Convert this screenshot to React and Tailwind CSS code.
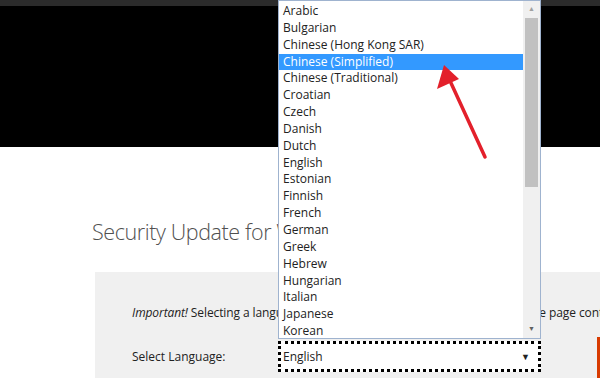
import React from "react";

const langs = [
  "Arabic","Bulgarian","Chinese (Hong Kong SAR)","Chinese (Simplified)","Chinese (Traditional)",
  "Croatian","Czech","Danish","Dutch","English","Estonian","Finnish","French","German","Greek",
  "Hebrew","Hungarian","Italian","Japanese","Korean",
];

export default function App() {
  return (
    <div className="relative w-[600px] h-[378px] overflow-hidden bg-white font-['Open_Sans',sans-serif] text-[#222]">
      <div className="h-[147px] bg-black border-t-[6px] border-[#2b2b2b]" />
      <div className="pt-[71px] pl-[92px] text-[21.5px] tracking-[-0.4px] font-light text-[#505050] leading-[28px] whitespace-nowrap">
        Security Update for Windows
      </div>
      <div className="mt-[26px] ml-[95px] h-[200px] bg-[#f0f0f0] pl-[37px] pt-[33px] text-[12px] relative">
        <div className="whitespace-nowrap leading-[16px] tracking-[-0.1px]">
          <i>Important!</i> Selecting a language below will dynamically change the complete page content to that language.
        </div>
        <div className="mt-[20px] flex items-center">
          <div className="w-[146px] leading-[16px]">Select Language:</div>
          <div className="w-[263px] h-[31px] border-[3px] border-dotted border-black bg-white flex items-center justify-between pl-[2px] pr-[8px]">
            <span>English</span>
            <span className="text-[9px]">▼</span>
          </div>
        </div>
        <div className="absolute left-[502px] top-[65px] w-[20px] h-[60px] bg-[#d83b01]" />
      </div>

      <div className="absolute left-[278px] top-0 w-[263px] h-[339px] bg-white border border-[#9fb3cf] flex text-[12px]">
        <div className="flex-1 pt-[2px]">
          {langs.map((l) => (
            <div
              key={l}
              className={
                "h-[16.85px] leading-[16.85px] pl-[4px] whitespace-nowrap " +
                (l === "Chinese (Simplified)" ? "bg-[#3399ff] text-white" : "")
              }
            >
              {l}
            </div>
          ))}
        </div>
        <div className="w-[17px] bg-[#f0f0f0] flex flex-col items-center">
          <div className="h-[17px] flex items-center justify-center text-[7px] text-[#a0a0a0]">▲</div>
          <div className="w-[13px] h-[169px] bg-[#c1c1c1]" />
          <div className="flex-1" />
          <div className="h-[17px] flex items-center justify-center text-[7px] text-[#606060]">▼</div>
        </div>
      </div>

      <svg className="absolute left-0 top-0" width="600" height="378" viewBox="0 0 600 378">
        <line x1="485" y1="157" x2="451" y2="83" stroke="#e3202b" strokeWidth="3.5" strokeLinecap="round" />
        <polygon points="444,65 437,89 459,79" fill="#e3202b" />
      </svg>
    </div>
  );
}
